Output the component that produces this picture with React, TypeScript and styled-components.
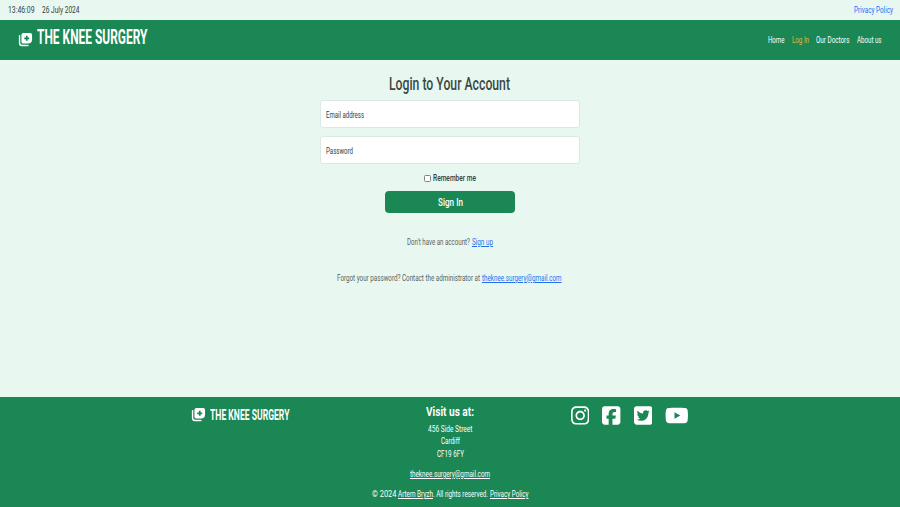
import React, { useLayoutEffect, useRef, useState } from "react";
import styled, { createGlobalStyle } from "styled-components";
import { FaInstagram, FaSquareFacebook, FaSquareTwitter, FaYoutube } from "react-icons/fa6";

const GREEN = "#1a8754";
const MINT = "#e8f8f1";

const GlobalStyle = createGlobalStyle`
  *, *::before, *::after { box-sizing: border-box; }
  body {
    margin: 0;
    background: ${MINT};
    color: #333d38;
    font-family: Roboto, "Liberation Sans", sans-serif;
    font-size: 9.4px;
    line-height: 12px;
  }
`;

/* Condensed lettering: squeezes a run of text into a given width. */
const FitBox = styled.span<{ $w: number }>`
  display: inline-block;
  flex: none;
  width: ${(p) => p.$w}px;
  white-space: nowrap;
  text-align: left;
  text-decoration: inherit;
`;
const FitInner = styled.span`
  display: inline-block;
  transform-origin: left center;
  text-decoration: inherit;
`;

function Fit({ w, children }: { w: number; children: React.ReactNode }) {
  const ref = useRef<HTMLSpanElement>(null);
  const [scale, setScale] = useState(1);
  useLayoutEffect(() => {
    if (ref.current) setScale(w / ref.current.getBoundingClientRect().width);
  }, [w]);
  return (
    <FitBox $w={w}>
      <FitInner ref={ref} style={{ transform: `scaleX(${scale})` }}>{children}</FitInner>
    </FitBox>
  );
}

const Page = styled.div`
  height: 507px;
  display: flex;
  flex-direction: column;
  overflow: hidden;
`;
const TopBar = styled.div`
  height: 20px;
  padding: 0 7.5px;
  display: flex;
  align-items: center;
  gap: 8px;
`;
const Link = styled.a<{ $color?: string; $plain?: boolean }>`
  color: ${(p) => p.$color ?? "#1f6ff0"};
  text-decoration: ${(p) => (p.$plain ? "none" : "underline")};
  text-underline-offset: 1px;
  text-decoration-thickness: 1px;
`;
const Push = styled.div`
  margin-left: auto;
  display: flex;
`;
const Header = styled.header`
  height: 39.5px;
  flex: none;
  padding: 0 18.5px 0 18px;
  display: flex;
  align-items: center;
  background: ${GREEN};
`;
const Brand = styled.div<{ $size: number }>`
  display: flex;
  align-items: center;
  gap: 4px;
  color: #fff;
  font-size: ${(p) => p.$size}px;
  line-height: 20px;
  font-weight: 700;
`;
const HeaderBrand = styled(Brand)`
  margin-top: -3px;
  svg { margin-top: 2px; }
`;
const Nav = styled.nav`
  margin-left: auto;
  display: flex;
  gap: 7.5px;
`;
const NavLink = styled.a<{ $active?: boolean }>`
  display: flex;
  color: ${(p) => (p.$active ? "#e0b83f" : "#fff")};
  text-decoration: none;
`;
const Main = styled.main`
  flex: 1;
  display: flex;
  flex-direction: column;
  align-items: center;
`;
const Title = styled.h1`
  margin: 13px 1px 5px 0;
  height: 22.5px;
  font-size: 18.8px;
  line-height: 23px;
  font-weight: 500;
  color: #3b4741;
`;
const Field = styled.label`
  width: 260px;
  height: 28px;
  margin-bottom: 8px;
  padding: 1px 5px 0;
  display: flex;
  align-items: center;
  background: #fff;
  border: 1px solid #dce9e2;
  border-radius: 3px;
`;
const Remember = styled.label`
  display: flex;
  align-items: center;
  gap: 2px;
  height: 12px;
  margin-right: 1px;
  font-weight: 500;
`;
const Check = styled.input`
  appearance: none;
  width: 7px;
  height: 7px;
  margin: 0;
  border: 1px solid #7c8480;
  border-radius: 1.5px;
  background: #fff;
`;
const Submit = styled.button`
  width: 130px;
  height: 22px;
  margin-top: 7px;
  padding: 0 0 1px;
  border: 0;
  border-radius: 4px;
  background: ${GREEN};
  color: #fff;
  font: 500 11.5px/20px Roboto, sans-serif;
`;
const Note = styled.p<{ $top: number }>`
  margin: ${(p) => p.$top}px 1px 0 0;
  height: 12px;
  display: flex;
  gap: 2px;
  color: #59645f;
`;
const Footer = styled.footer`
  height: 110px;
  flex: none;
  display: grid;
  grid-template-columns: 382px 136px 1fr;
  grid-template-rows: 70px 20px 20px;
  background: ${GREEN};
  color: #fff;
`;
const FooterBrand = styled(Brand)`
  height: 20px;
  margin: 8px 0 0 191px;
  svg { margin-top: -2px; }
`;
const Visit = styled.div`
  display: flex;
  flex-direction: column;
  align-items: center;
  padding-top: 6px;
  line-height: 12.3px;
`;
const VisitTitle = styled.h2`
  margin: 0 0 2px;
  font-size: 12.5px;
  line-height: 18px;
  font-weight: 700;
`;
const Social = styled.div`
  display: flex;
  margin: 7px 0 0 53px;
  gap: 13px;
  height: 22px;
  align-items: center;
  svg { width: 18.4px; height: 21px; }
  svg:last-child { width: 23.6px; }
`;
const FooterLine = styled.div`
  grid-column: 1 / -1;
  display: flex;
  justify-content: center;
  padding-top: 1px;
`;
const Copyright = styled.span`
  display: flex;
  margin-right: 2px;
`;

const Logo = ({ size }: { size: number }) => (
  <svg width={size} height={size} viewBox="0 0 24 24" fill="none">
    <path d="M2.500 6v11.500a4 4 0 0 0 4 4H16" stroke="#fff" strokeWidth="2.200" strokeLinecap="round" />
    <path d="M8.500 1.500h11a3 3 0 0 1 3 3V12a6.500 6.500 0 0 1-6.500 6.500H8.500a3 3 0 0 1-3-3v-11a3 3 0 0 1 3-3z" fill="#fff" />
    <path d="M14 6v8M10 10h8" stroke={GREEN} strokeWidth="2.800" />
  </svg>
);

export default function App() {
  return (
    <Page>
      <GlobalStyle />
      <TopBar>
        <Fit w={26.5}>13:46:09</Fit>
        <Fit w={37.5}>26 July 2024</Fit>
        <Push><Link $plain><Fit w={39}>Privacy Policy</Fit></Link></Push>
      </TopBar>
      <Header>
        <HeaderBrand $size={19.5}><Logo size={15} /><Fit w={110.5}>THE KNEE SURGERY</Fit></HeaderBrand>
        <Nav>
          <NavLink><Fit w={16.5}>Home</Fit></NavLink>
          <NavLink $active><Fit w={17}>Log In</Fit></NavLink>
          <NavLink><Fit w={33.5}>Our Doctors</Fit></NavLink>
          <NavLink><Fit w={24.5}>About us</Fit></NavLink>
        </Nav>
      </Header>
      <Main>
        <Title><Fit w={121}>Login to Your Account</Fit></Title>
        <Field><Fit w={38}>Email address</Fit></Field>
        <Field><Fit w={27}>Password</Fit></Field>
        <Remember><Check type="checkbox" /><Fit w={43}>Remember me</Fit></Remember>
        <Submit><Fit w={25}>Sign In</Fit></Submit>
        <Note $top={23}><Fit w={63}>Don't have an account?</Fit><Link><Fit w={21}>Sign up</Fit></Link></Note>
        <Note $top={24}>
          <Fit w={143}>Forgot your password? Contact the administrator at</Fit>
          <Link><Fit w={79.5}>theknee.surgery@gmail.com</Fit></Link>
        </Note>
      </Main>
      <Footer>
        <FooterBrand $size={14}><Logo size={15} /><Fit w={79.5}>THE KNEE SURGERY</Fit></FooterBrand>
        <Visit>
          <VisitTitle><Fit w={48}>Visit us at:</Fit></VisitTitle>
          <Fit w={44.5}>456 Side Street</Fit>
          <Fit w={19}>Cardiff</Fit>
          <Fit w={27}>CF19 6FY</Fit>
        </Visit>
        <Social>
          <FaInstagram />
          <FaSquareFacebook />
          <FaSquareTwitter />
          <FaYoutube />
        </Social>
        <FooterLine><Link $color="#fff"><Fit w={80}>theknee.surgery@gmail.com</Fit></Link></FooterLine>
        <FooterLine>
          <Copyright><Fit w={24.5}>© 2024</Fit></Copyright>
          <Link $color="#fff"><Fit w={35}>Artem Bryzh</Fit></Link>
          <Copyright><Fit w={55}>. All rights reserved.</Fit></Copyright>
          <Link $color="#fff"><Fit w={38.5}>Privacy Policy</Fit></Link>
        </FooterLine>
      </Footer>
    </Page>
  );
}
